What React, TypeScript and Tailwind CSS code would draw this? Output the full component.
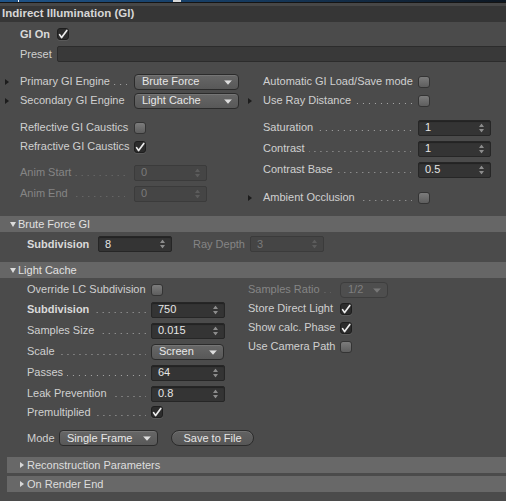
import React from "react";

const FONT = "font-['Liberation_Sans',Arial,sans-serif]";

const Tri = () => (
  <span className="inline-block w-0 h-0 border-y-[3.5px] border-y-transparent border-l-[4px] border-l-[#1c1c1c]" />
);

// dotted leader drawn as a repeating background so it never clips text
const Leader = ({ dim = false }: { dim?: boolean }) => (
  <span
    className={`ml-[4px] flex-1 min-w-0 h-[1px] translate-y-[3px] bg-repeat-x bg-right bg-[length:6px_1px] ${
      dim
        ? "bg-[linear-gradient(to_left,#707070_1px,transparent_1px)]"
        : "bg-[linear-gradient(to_left,#a8a8a8_1px,transparent_1px)]"
    }`}
  />
);

const Label = ({
  text,
  w,
  dots = true,
  bold = false,
  dim = false,
  pr = "pr-[7px]",
}: {
  text: string;
  w: string;
  dots?: boolean;
  bold?: boolean;
  dim?: boolean;
  pr?: string;
}) => (
  <div className={`flex items-center shrink-0 ${w} ${pr}`}>
    <span
      className={`whitespace-nowrap ${bold ? "font-bold text-[#dadada]" : ""} ${
        dim ? "text-[#858585]" : ""
      }`}
    >
      {text}
    </span>
    {dots && <Leader dim={dim} />}
  </div>
);

const Check = ({ on = false }: { on?: boolean }) =>
  on ? (
    <span className="flex items-center justify-center w-[12px] h-[12px] rounded-[3px] bg-[#2c2c2c] border border-[#1e1e1e] shadow-[0_1px_0_rgba(255,255,255,0.08)]">
      <svg width="10" height="10" viewBox="0 0 10 10">
        <path
          d="M1.6 5.6 L3.6 8.6 L8.8 1.4"
          fill="none"
          stroke="#ececec"
          strokeWidth="1.7"
          strokeLinecap="round"
          strokeLinejoin="round"
        />
      </svg>
    </span>
  ) : (
    <span className="block w-[12px] h-[12px] rounded-[3px] bg-gradient-to-b from-[#7c7c7c] to-[#5e5e5e] border border-[#343434]" />
  );

const Stepper = ({ dim = false }: { dim?: boolean }) => (
  <svg width="5" height="9" viewBox="0 0 5 9" className="absolute right-[6px] top-1/2 -translate-y-1/2">
    <path d="M0 3.5 L2.5 0 L5 3.5Z M0 5.5 L5 5.5 L2.5 9Z" fill={dim ? "#5c5c5c" : "#8c8c8c"} />
  </svg>
);

const NumField = ({ value, w, dim = false }: { value: string; w: string; dim?: boolean }) => (
  <div
    className={`relative flex items-center h-[16px] ${w} pl-[6px] rounded-[2px] border ${
      dim
        ? "bg-[#454545] border-[#3b3b3b] text-[#7a7a7a]"
        : "bg-[#343434] border-[#262626] text-[#e6e6e6] shadow-[inset_0_1px_1px_rgba(0,0,0,0.35)]"
    }`}
  >
    {value}
    <Stepper dim={dim} />
  </div>
);

const Dropdown = ({ value, w, dim = false }: { value: string; w: string; dim?: boolean }) => (
  <div
    className={`relative flex items-center h-[16px] ${w} pl-[7px] rounded-[4px] border ${
      dim
        ? "bg-[#4e4e4e] border-[#3d3d3d] text-[#7f7f7f]"
        : "bg-gradient-to-b from-[#676767] to-[#585858] border-[#2b2b2b] text-[#e8e8e8] shadow-[inset_0_1px_0_rgba(255,255,255,0.1)]"
    }`}
  >
    {value}
    <svg width="8" height="5" viewBox="0 0 8 5" className="absolute right-[6px] top-1/2 -translate-y-[35%]">
      <path d="M0 0 H8 L4 4.5Z" fill={dim ? "#777" : "#dedede"} />
    </svg>
  </div>
);

const SectionBar = ({ title }: { title: string }) => (
  <div className="flex items-center h-[16px] bg-[#666666] pl-[10px] text-[#e2e2e2]">
    <span className="inline-block w-0 h-0 border-x-[3.5px] border-x-transparent border-t-[5px] border-t-[#dcdcdc] mr-[2px]" />
    {title}
  </div>
);

const SubBar = ({ title }: { title: string }) => (
  <div className="flex items-center h-[16px] ml-[7px] bg-[#686868] pl-[13px] text-[#dedede]">
    <span className="inline-block w-0 h-0 border-y-[3.5px] border-y-transparent border-l-[4px] border-l-[#d8d8d8] mr-[3px]" />
    {title}
  </div>
);

export default function App() {
  return (
    <div className={`w-[506px] h-[501px] overflow-hidden bg-[#4b4b4b] text-[11px] leading-none text-[#d0d0d0] ${FONT}`}>
      {/* tab strip remnant */}
      <div className="relative h-[2px] bg-gradient-to-r from-[#1f5489] via-[#15395d] to-[#0d1722]">
        <span className="absolute left-[18px] top-0 w-[1px] h-[2px] bg-white" />
        <span className="absolute left-[173px] top-0 w-[8px] h-[2px] bg-[#d8d8d8]" />
      </div>
      <div className="h-[1px] bg-[#141414]" />
      <div className="h-[3px] bg-[#474747]" />
      <div className="flex items-center h-[16px] bg-[#363636] pl-[2px] font-bold text-[11.5px] text-[#d6d6d6]">
        Indirect Illumination (GI)
      </div>

      {/* GI On / Preset */}
      <div className="flex items-center h-[18px] mt-[3px] pl-[20px]">
        <span className="w-[37px] font-bold text-[#dadada]">GI On</span>
        <Check on />
      </div>
      <div className="flex items-center h-[16px] mt-[3px] pl-[20px]">
        <span className="w-[37px]">Preset</span>
        <div className="flex-1 h-[16px] -mr-[2px] bg-[#393939] border border-[#2c2c2c] rounded-[2px]" />
      </div>

      {/* main parameters */}
      <div className="flex mt-[10px]">
        <div className="flex flex-col w-[245px]">
          <div className="flex items-center h-[19px]">
            <span className="w-[20px] pl-[5px] flex items-center"><Tri /></span>
            <Label text="Primary GI Engine" w="w-[114px]" />
            <Dropdown value="Brute Force" w="w-[105px]" />
          </div>
          <div className="flex items-center h-[19px]">
            <span className="w-[20px] pl-[5px] flex items-center"><Tri /></span>
            <Label text="Secondary GI Engine" w="w-[114px]" dots={false} />
            <Dropdown value="Light Cache" w="w-[105px]" />
          </div>
          <div className="flex items-center h-[19px] mt-[8px] pl-[20px]">
            <Label text="Reflective GI Caustics" w="w-[114px]" dots={false} />
            <Check />
          </div>
          <div className="flex items-center h-[19px] pl-[20px]">
            <Label text="Refractive GI Caustics" w="w-[114px]" dots={false} />
            <Check on />
          </div>
          <div className="flex items-center h-[21px] mt-[6px] pl-[20px]">
            <Label text="Anim Start" w="w-[114px]" dim pr="pr-[9px]" />
            <NumField value="0" w="w-[73px]" dim />
          </div>
          <div className="flex items-center h-[21px] pl-[20px]">
            <Label text="Anim End" w="w-[114px]" dim pr="pr-[9px]" />
            <NumField value="0" w="w-[73px]" dim />
          </div>
        </div>

        <div className="flex flex-col flex-1">
          <div className="flex items-center h-[19px] pl-[18px]">
            <Label text="Automatic GI Load/Save mode" w="w-[155px]" dots={false} />
            <Check />
          </div>
          <div className="flex items-center h-[19px]">
            <span className="w-[18px] pl-[3px] flex items-center"><Tri /></span>
            <Label text="Use Ray Distance" w="w-[155px]" pr="pr-[6px]" />
            <Check />
          </div>
          <div className="flex items-center h-[21px] mt-[7px] pl-[18px]">
            <Label text="Saturation" w="w-[155px]" />
            <NumField value="1" w="w-[73px]" />
          </div>
          <div className="flex items-center h-[21px] pl-[18px]">
            <Label text="Contrast" w="w-[155px]" />
            <NumField value="1" w="w-[73px]" />
          </div>
          <div className="flex items-center h-[21px] pl-[18px]">
            <Label text="Contrast Base" w="w-[155px]" />
            <NumField value="0.5" w="w-[73px]" />
          </div>
          <div className="flex items-center h-[19px] mt-[8px]">
            <span className="w-[18px] pl-[3px] flex items-center"><Tri /></span>
            <Label text="Ambient Occlusion" w="w-[155px]" pr="pr-[6px]" />
            <Check />
          </div>
        </div>
      </div>

      {/* Brute Force GI */}
      <div className="mt-[9px]">
        <SectionBar title="Brute Force GI" />
        <div className="h-[30px] pt-[4px]">
          <div className="flex items-center h-[16px] pl-[27px]">
            <span className="w-[71px] font-bold text-[#dadada]">Subdivision</span>
            <NumField value="8" w="w-[74px]" />
            <span className="ml-[21px] w-[57px] text-[#858585]">Ray Depth</span>
            <NumField value="3" w="w-[74px]" dim />
          </div>
        </div>
      </div>

      {/* Light Cache */}
      <SectionBar title="Light Cache" />
      <div className="flex mt-[2px]">
        <div className="flex flex-col w-[248px] pl-[27px]">
          <div className="flex items-center h-[19px]">
            <Label text="Override LC Subdivision" w="w-[124px]" dots={false} />
            <Check />
          </div>
          <div className="flex items-center h-[21px]">
            <Label text="Subdivision" w="w-[124px]" bold pr="pr-[5px]" />
            <NumField value="750" w="w-[74px]" />
          </div>
          <div className="flex items-center h-[21px]">
            <Label text="Samples Size" w="w-[124px]" pr="pr-[5px]" />
            <NumField value="0.015" w="w-[74px]" />
          </div>
          <div className="flex items-center h-[21px]">
            <Label text="Scale" w="w-[124px]" pr="pr-[5px]" />
            <Dropdown value="Screen" w="w-[73px]" />
          </div>
          <div className="flex items-center h-[21px]">
            <Label text="Passes" w="w-[124px]" pr="pr-[5px]" />
            <NumField value="64" w="w-[74px]" />
          </div>
          <div className="flex items-center h-[21px]">
            <Label text="Leak Prevention" w="w-[124px]" pr="pr-[5px]" />
            <NumField value="0.8" w="w-[74px]" />
          </div>
          <div className="flex items-center h-[16px]">
            <Label text="Premultiplied" w="w-[124px]" pr="pr-[5px]" />
            <Check on />
          </div>
        </div>
        <div className="flex flex-col flex-1">
          <div className="flex items-center h-[19px]">
            <Label text="Samples Ratio" w="w-[92px]" dim pr="pr-[9px]" />
            <Dropdown value="1/2" w="w-[48px]" dim />
          </div>
          <div className="flex items-center h-[19px]">
            <Label text="Store Direct Light" w="w-[92px]" dots={false} />
            <Check on />
          </div>
          <div className="flex items-center h-[19px]">
            <Label text="Show calc. Phase" w="w-[92px]" dots={false} />
            <Check on />
          </div>
          <div className="flex items-center h-[19px]">
            <Label text="Use Camera Path" w="w-[92px]" dots={false} />
            <Check />
          </div>
        </div>
      </div>

      <div className="flex items-center h-[20px] mt-[8px] pl-[27px]">
        <span className="w-[32px]">Mode</span>
        <Dropdown value="Single Frame" w="w-[99px]" />
        <button className="ml-[13px] flex items-center justify-center w-[83px] h-[16px] rounded-full bg-gradient-to-b from-[#626262] to-[#565656] border border-[#2b2b2b] text-[#e6e6e6] shadow-[inset_0_1px_0_rgba(255,255,255,0.1)]">
          Save to File
        </button>
      </div>

      <div className="mt-[9px]">
        <SubBar title="Reconstruction Parameters" />
      </div>
      <div className="mt-[3px]">
        <SubBar title="On Render End" />
      </div>
    </div>
  );
}
